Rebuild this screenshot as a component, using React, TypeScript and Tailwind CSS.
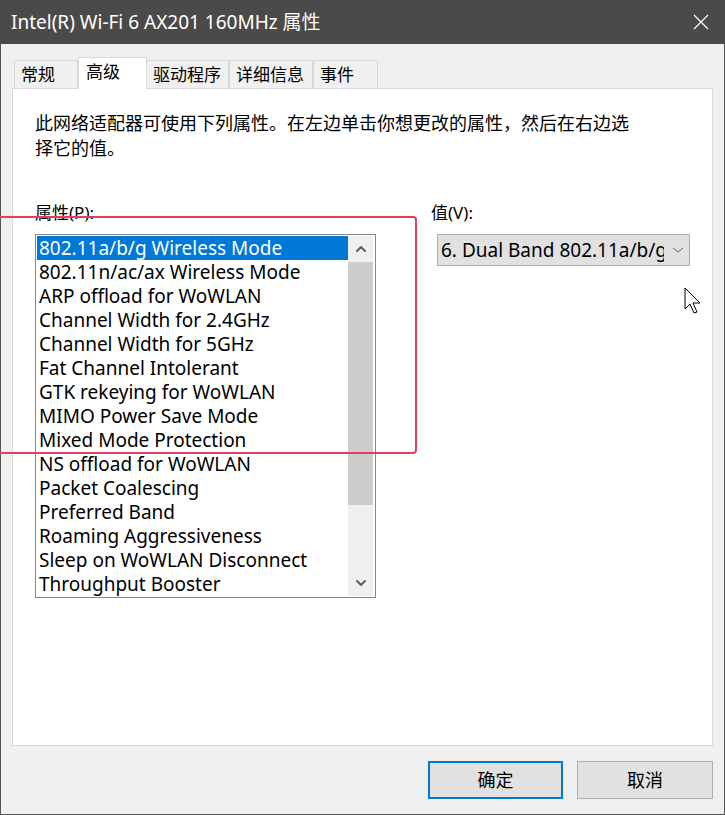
import { ChevronUp, ChevronDown } from "lucide-react";

const items = [
  "802.11a/b/g Wireless Mode",
  "802.11n/ac/ax Wireless Mode",
  "ARP offload for WoWLAN",
  "Channel Width for 2.4GHz",
  "Channel Width for 5GHz",
  "Fat Channel Intolerant",
  "GTK rekeying for WoWLAN",
  "MIMO Power Save Mode",
  "Mixed Mode Protection",
  "NS offload for WoWLAN",
  "Packet Coalescing",
  "Preferred Band",
  "Roaming Aggressiveness",
  "Sleep on WoWLAN Disconnect",
  "Throughput Booster",
];

const tabs = ["常规", "高级", "驱动程序", "详细信息", "事件"];
const tabWidths = ["w-[64px]", "w-[69px]", "w-[82px]", "w-[84px]", "w-[65px]"];

const font = "font-['Noto_Sans','Noto_Sans_CJK_SC',sans-serif]";

function Cursor() {
  return (
    <svg width="20" height="28" viewBox="0 0 20 28" className="absolute left-[683px] top-[287px]">
      <path d="M1 1 L1 22 L6 17 L10 26 L13 25 L9 16 L16 16 Z" fill="#fff" stroke="#000" strokeWidth="1" />
    </svg>
  );
}

export default function App() {
  return (
    <div className={`relative w-[725px] h-[815px] bg-[#f0f0f0] border-x border-b border-[#555] flex flex-col text-[#000] ${font}`}>
      {/* title bar */}
      <div className="h-[44px] bg-[#4b4a48] flex items-center justify-between pl-[11px] pr-[16px] -mx-px">
        <span className="text-white text-[19px] leading-none">Intel(R) Wi-Fi 6 AX201 160MHz 属性</span>
        <svg width="16" height="16" viewBox="0 0 16 16">
          <path d="M1 1 L15 15 M15 1 L1 15" stroke="#fff" strokeWidth="1.2" />
        </svg>
      </div>

      {/* tabs */}
      <div className="flex items-end h-[44px] pl-[13px]">
        {tabs.map((t, i) =>
          i === 1 ? (
            <div
              key={t}
              className={`${tabWidths[i]} h-[32px] -mb-px bg-white border border-b-0 border-[#d9d9d9] text-[17px] leading-[24px] pl-[7px] pt-[2px] relative z-10`}
            >
              {t}
            </div>
          ) : (
            <div
              key={t}
              className={`${tabWidths[i]} h-[28px] bg-[#f0f0f0] border border-b-0 border-[#d9d9d9] text-[17px] leading-[24px] pl-[6px] pt-[2px] ${i === 2 ? "border-l-0" : ""}`}
            >
              {t}
            </div>
          )
        )}
      </div>

      {/* panel */}
      <div className="mx-[11px] h-[658px] bg-white border border-[#d9d9d9] pl-[22px] pr-[20px] pt-[22px]">
        <p className="text-[18px] leading-[25px] w-[600px]">
          此网络适配器可使用下列属性。在左边单击你想更改的属性，然后在右边选择它的值。
        </p>

        <div className="flex mt-[41px]">
          <div className="w-[341px]">
            <div className="text-[17px] leading-[22px]">属性(P):</div>
            <div className="mt-[10px] h-[364px] border border-[#828790] flex">
              <div className="flex-1 pl-[1px] pt-[1px]">
                {items.map((it, i) => (
                  <div
                    key={it}
                    className={`h-[24px] leading-[24px] text-[19px] pl-[2px] whitespace-nowrap ${
                      i === 0 ? "bg-[#0078d7] text-white" : ""
                    }`}
                  >
                    {it}
                  </div>
                ))}
              </div>
              <div className="w-[25px] my-[1px] mr-[2px] bg-[#f0f0f0] flex flex-col">
                <div className="h-[26px] flex items-center justify-center">
                  <ChevronUp size={16} strokeWidth={3} color="#606060" />
                </div>
                <div className="h-[243px] bg-[#cdcdcd]" />
                <div className="flex-1" />
                <div className="h-[26px] flex items-center justify-center">
                  <ChevronDown size={16} strokeWidth={3} color="#606060" />
                </div>
              </div>
            </div>
          </div>

          <div className="ml-[55px]">
            <div className="text-[17px] leading-[22px]">值(V):</div>
            <div className="mt-[10px] ml-[6px] w-[253px] h-[32px] bg-[#e1e1e1] border border-[#adadad] flex items-center">
              <span className="pl-[3px] w-[226px] overflow-hidden whitespace-nowrap text-[19px] leading-[28px]">
                6. Dual Band 802.11a/b/g/n/ac/ax
              </span>
              <svg width="12" height="8" viewBox="0 0 12 8" className="ml-[8px]">
                <path d="M1 2 L6 6 L11 2" stroke="#666" strokeWidth="1" fill="none" />
              </svg>
            </div>
          </div>
        </div>
      </div>

      {/* buttons */}
      <div className="flex justify-end gap-[14px] pr-[11px] mt-[15px]">
        <button className="w-[135px] h-[38px] bg-[#e1e1e1] border-2 border-[#0078d7] text-[18px]">确定</button>
        <button className="w-[136px] h-[38px] bg-[#e1e1e1] border border-[#adadad] text-[18px]">取消</button>
      </div>

      {/* annotation */}
      <div className="absolute left-[-20px] top-[216px] w-[436px] h-[238px] border-2 border-[#e0405f] rounded-[4px] pointer-events-none" />

      <Cursor />
    </div>
  );
}
